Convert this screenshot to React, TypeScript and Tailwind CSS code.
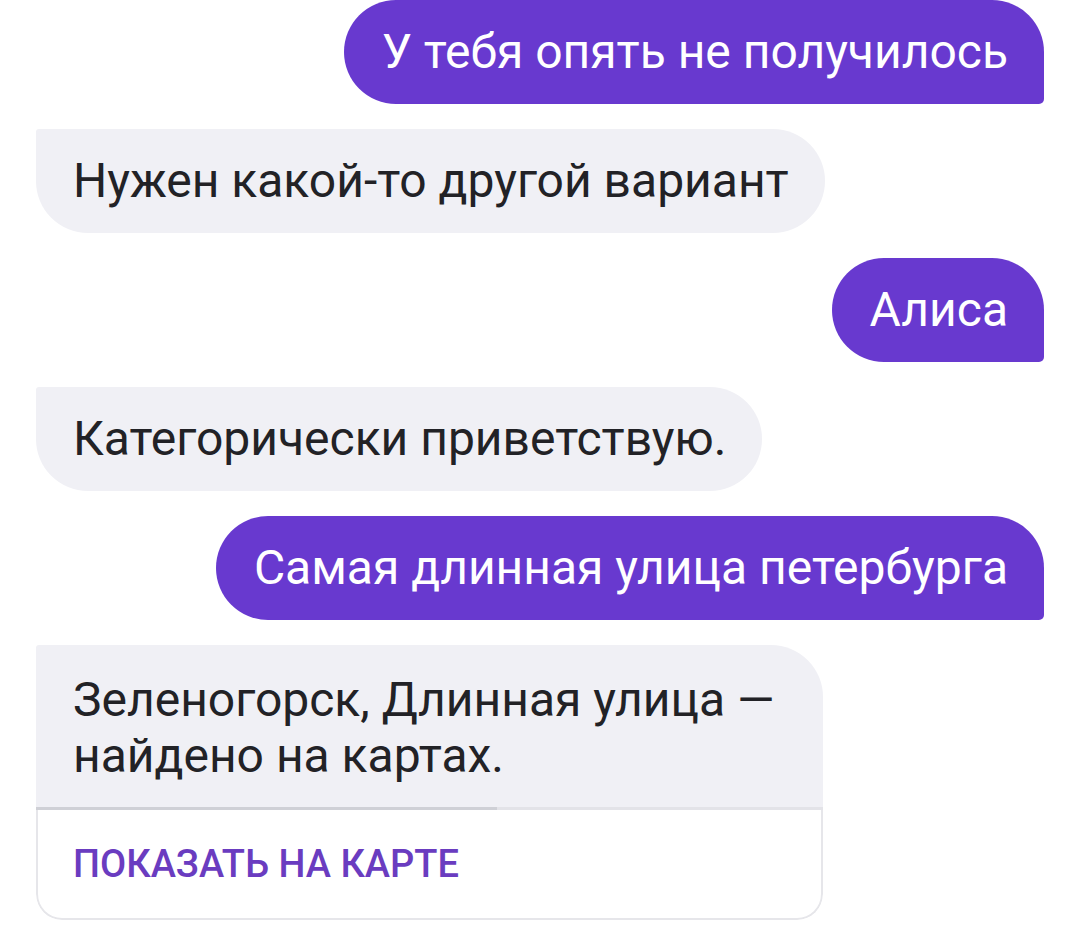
const font = { fontFamily: "Roboto, 'Noto Sans', sans-serif" };

function UserBubble({ text }: { text: string }) {
  return (
    <div className="flex justify-end">
      <div className="flex h-[104px] items-center rounded-[52px] rounded-br-[5px] bg-[#6839cf] pl-[38px] pr-[36px] text-[48px] text-white">
        {text}
      </div>
    </div>
  );
}

function BotBubble({ text }: { text: string }) {
  return (
    <div className="flex justify-start">
      <div className="flex h-[104px] items-center rounded-[52px] rounded-tl-[3px] bg-[#f0f0f5] pl-[37px] pr-[36px] text-[48px] text-[#222226]">
        {text}
      </div>
    </div>
  );
}

export default function App() {
  return (
    <div className="h-[927px] w-[1080px] bg-white pl-[36px] pr-[36px]" style={font}>
      <div className="flex flex-col gap-[25px]">
        <UserBubble text="У тебя опять не получилось" />
        <BotBubble text="Нужен какой-то другой вариант" />
        <UserBubble text="Алиса" />
        <BotBubble text="Категорически приветствую." />
        <UserBubble text="Самая длинная улица петербурга" />
        <div className="flex justify-start">
          <div className="w-[787px] overflow-hidden rounded-tl-[3px] rounded-tr-[52px] rounded-b-[26px]">
            <div className="bg-[#f0f0f5] pb-[23px] pl-[37px] pr-[36px] pt-[27px] text-[48px] leading-[56px] text-[#222226]">
              Зеленогорск, Длинная улица —<br />
              найдено на картах.
            </div>
            <div className="relative h-[3px] bg-[#e3e3e8]">
              <div className="absolute left-0 top-0 h-[3px] w-[461px] bg-[#cfd0d6]" />
            </div>
            <div className="flex h-[110px] items-center rounded-b-[26px] border-x-2 border-b-2 border-[#e6e6ea] bg-white pl-[35px] text-[38px] font-medium uppercase text-[#6a3cc0]">
              Показать на карте
            </div>
          </div>
        </div>
      </div>
    </div>
  );
}
